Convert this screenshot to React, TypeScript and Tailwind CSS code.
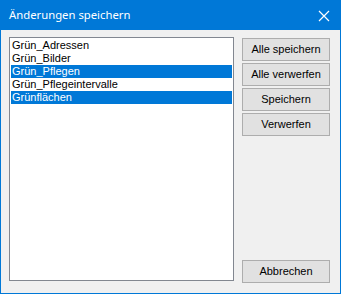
import React from 'react';

const items = [
  { label: 'Grün_Adressen', selected: false },
  { label: 'Grün_Bilder', selected: false },
  { label: 'Grün_Pflegen', selected: true },
  { label: 'Grün_Pflegeintervalle', selected: false },
  { label: 'Grünflächen', selected: true },
];

const actions = ['Alle speichern', 'Alle verwerfen', 'Speichern', 'Verwerfen'];

const DialogButton: React.FC<{ label: string }> = ({ label }) => (
  <button className="h-[23px] w-[88px] bg-[#e1e1e1] border border-[#adadad] text-[11px] text-black leading-none flex items-center justify-center font-['Liberation_Sans',Arial,sans-serif]">
    {label}
  </button>
);

const App: React.FC = () => {
  return (
    <div className="w-[341px] h-[294px] border border-[#0078d7] bg-[#f0f0f0] flex flex-col">
      <div className="h-[30px] bg-[#0078d7] flex items-center justify-between pl-[8px] pr-[9px] -mt-[1px] pt-[1px]">
        <span className="text-white text-[11.3px] font-['Noto_Sans',sans-serif]">Änderungen speichern</span>
        <svg width="12" height="12" viewBox="0 0 12 12" className="mr-[1px]">
          <path d="M1 1 L11 11 M11 1 L1 11" stroke="white" strokeWidth="1.2" fill="none" />
        </svg>
      </div>
      <div className="flex-1 flex pl-[8px] pr-[9px] pt-[7px] pb-[10px] gap-[8px]">
        <div className="w-[225px] h-[244px] bg-white border border-[#828790] p-[1px] font-['Liberation_Sans',Arial,sans-serif] text-[11px]">
          {items.map((item) => (
            <div
              key={item.label}
              className={
                item.selected
                  ? 'h-[13px] leading-[13px] px-[1px] bg-[#0078d7] text-white'
                  : 'h-[13px] leading-[13px] px-[1px] text-black'
              }
            >
              {item.label}
            </div>
          ))}
        </div>
        <div className="flex flex-col justify-between pt-[1px]">
          <div className="flex flex-col gap-[2px]">
            {actions.map((a) => (
              <DialogButton key={a} label={a} />
            ))}
          </div>
          <DialogButton label="Abbrechen" />
        </div>
      </div>
    </div>
  );
};

export default App;
